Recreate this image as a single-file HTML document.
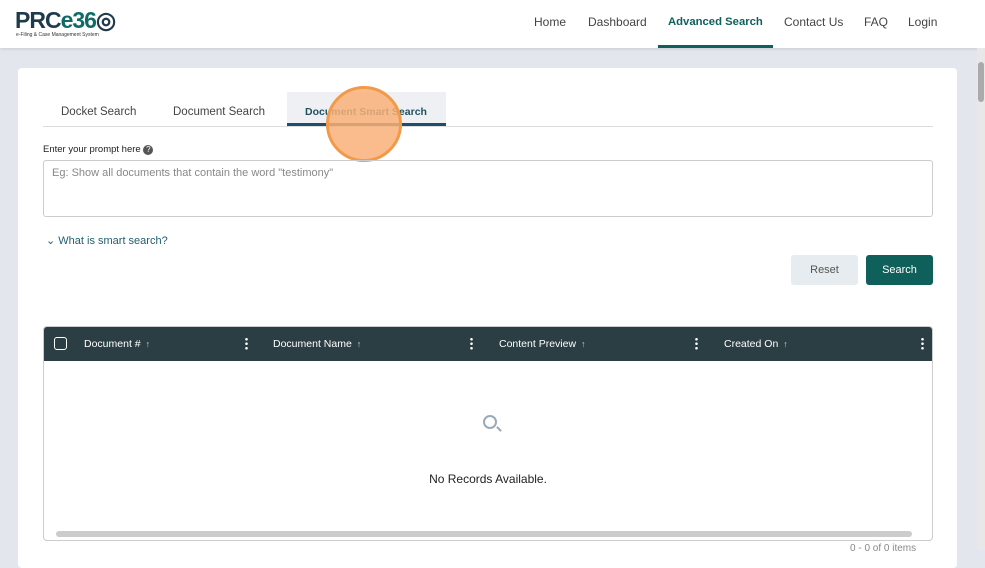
<!DOCTYPE html>
<html><head><meta charset="utf-8"><style>
*{box-sizing:border-box;margin:0;padding:0}
body{width:985px;height:550px;overflow:hidden;background:#e3e7ed;font-family:"Liberation Sans",sans-serif;position:relative;color:#333}
.hdr{position:absolute;left:0;top:0;width:985px;height:48px;background:#fff;box-shadow:0 1px 3px rgba(0,0,0,.12)}
.logo{position:absolute;left:15px;top:7px;font-weight:bold;font-size:23px;color:#1f3a4a;letter-spacing:-1px}
.logo span{color:#0f6b66}
.logo small{position:absolute;left:1px;top:25px;font-size:5px;font-weight:normal;letter-spacing:0;white-space:nowrap;color:#333}
.nav a{position:absolute;top:15px;font-size:12px;color:#444;text-decoration:none}
.nav a.act{color:#0f5f5a;font-weight:bold;font-size:11.3px;top:16px}
.navline{position:absolute;left:658px;top:45px;width:115px;height:3px;background:#0f5f5a}
.card{position:absolute;left:18px;top:68px;width:939px;height:500px;background:#fff;border-radius:4px}
.sb{position:absolute;left:977px;top:48px;width:8px;height:502px;background:#e8e8e8}
.sb div{position:absolute;left:1px;top:14px;width:6px;height:40px;background:#aaa;border-radius:3px}
.tab{position:absolute;top:106px;font-size:11.5px;color:#444}
.tabact{position:absolute;left:287px;top:92px;width:159px;height:34px;background:#eef0f3;border-bottom:3px solid #1e4e6e}
.tabline{position:absolute;left:43px;top:126px;width:890px;height:1px;background:#ddd}
.circle{position:absolute;left:326px;top:86px;width:76px;height:76px;border-radius:50%;background:rgba(249,176,120,.85);border:3px solid #f19a4a}
.lbl{position:absolute;left:43px;top:144px;font-size:9.5px;color:#222}
.ta{position:absolute;left:43px;top:160px;width:890px;height:57px;border:1px solid #ccc;border-radius:3px;font-size:11px;color:#888;padding:6px 8px}
.what{position:absolute;left:46px;top:234px;font-size:11px;color:#1e5e6e}
.btn{position:absolute;top:255px;height:30px;border-radius:3px;font-size:11px;line-height:30px;text-align:center}
.grid{position:absolute;left:43px;top:326px;width:890px;height:215px;border:1px solid #ccc;border-radius:4px;overflow:hidden}
.gh{height:34px;background:#2b3e44;color:#fff;font-size:10.5px;position:relative}
.gh span{position:absolute;top:11px}
.gh span b{font-weight:normal;font-size:9px;margin-left:5px;color:#ccc}
.dots{position:absolute;top:10px;width:3px;height:13px;background:radial-gradient(circle,#fff 1.2px,transparent 1.4px) 0 0/3px 4.5px}
.cb{position:absolute;left:10px;top:10px;width:13px;height:13px;border:1.5px solid #fff;border-radius:3px}
.nr{position:absolute;left:0;width:100%;top:145px;text-align:center;font-size:12px;color:#222}
.hs{position:absolute;left:12px;bottom:3px;width:856px;height:6px;background:#ccc;border-radius:3px}
</style></head><body>
<div class="hdr">
<div class="logo">PRC<span>e36</span>◎<small>e-Filing &amp; Case Management System</small></div>
<div class="nav">
<a style="left:534px">Home</a><a style="left:588px">Dashboard</a><a class="act" style="left:668px">Advanced Search</a><a style="left:784px">Contact Us</a><a style="left:864px">FAQ</a><a style="left:908px">Login</a>
</div>
<div class="navline"></div>
</div>
<div class="sb"><div></div></div>
<div class="card"></div>
<div class="tabact"></div>
<div class="tabline"></div>
<div class="tab" style="left:61px">Docket Search</div>
<div class="tab" style="left:173px">Document Search</div>
<div class="tab" style="left:305px;color:#1e5060;font-weight:bold;font-size:10.5px;top:106px">Document Smart Search</div>
<div class="circle"></div>
<div class="lbl">Enter your prompt here <span style="display:inline-block;width:10px;height:10px;border-radius:50%;background:#555;color:#fff;font-size:8px;text-align:center;line-height:10px">?</span></div>
<div class="ta">Eg: Show all documents that contain the word "testimony"</div>
<div class="what">⌄ What is smart search?</div>
<div class="btn" style="left:791px;width:67px;background:#e6ecef;color:#555">Reset</div>
<div class="btn" style="left:866px;width:67px;background:#0f5f5a;color:#fff">Search</div>
<div class="grid">
<div class="gh"><div class="cb"></div>
<span style="left:40px">Document #<b>↑</b></span><div class="dots" style="left:201px"></div>
<span style="left:229px">Document Name<b>↑</b></span><div class="dots" style="left:426px"></div>
<span style="left:455px">Content Preview<b>↑</b></span><div class="dots" style="left:651px"></div>
<span style="left:680px">Created On<b>↑</b></span><div class="dots" style="left:877px"></div>
</div>
<div style="position:absolute;left:439px;top:88px;width:14px;height:14px;border:2px solid #9ab;border-radius:50%"></div>
<div style="position:absolute;left:452px;top:101px;width:6px;height:2px;background:#9ab;transform:rotate(45deg)"></div>
<div class="nr">No Records Available.</div>
<div class="hs"></div>
</div>
<div style="position:absolute;left:850px;top:543px;font-size:10px;color:#888">0 - 0 of 0 items</div>
</body></html>
